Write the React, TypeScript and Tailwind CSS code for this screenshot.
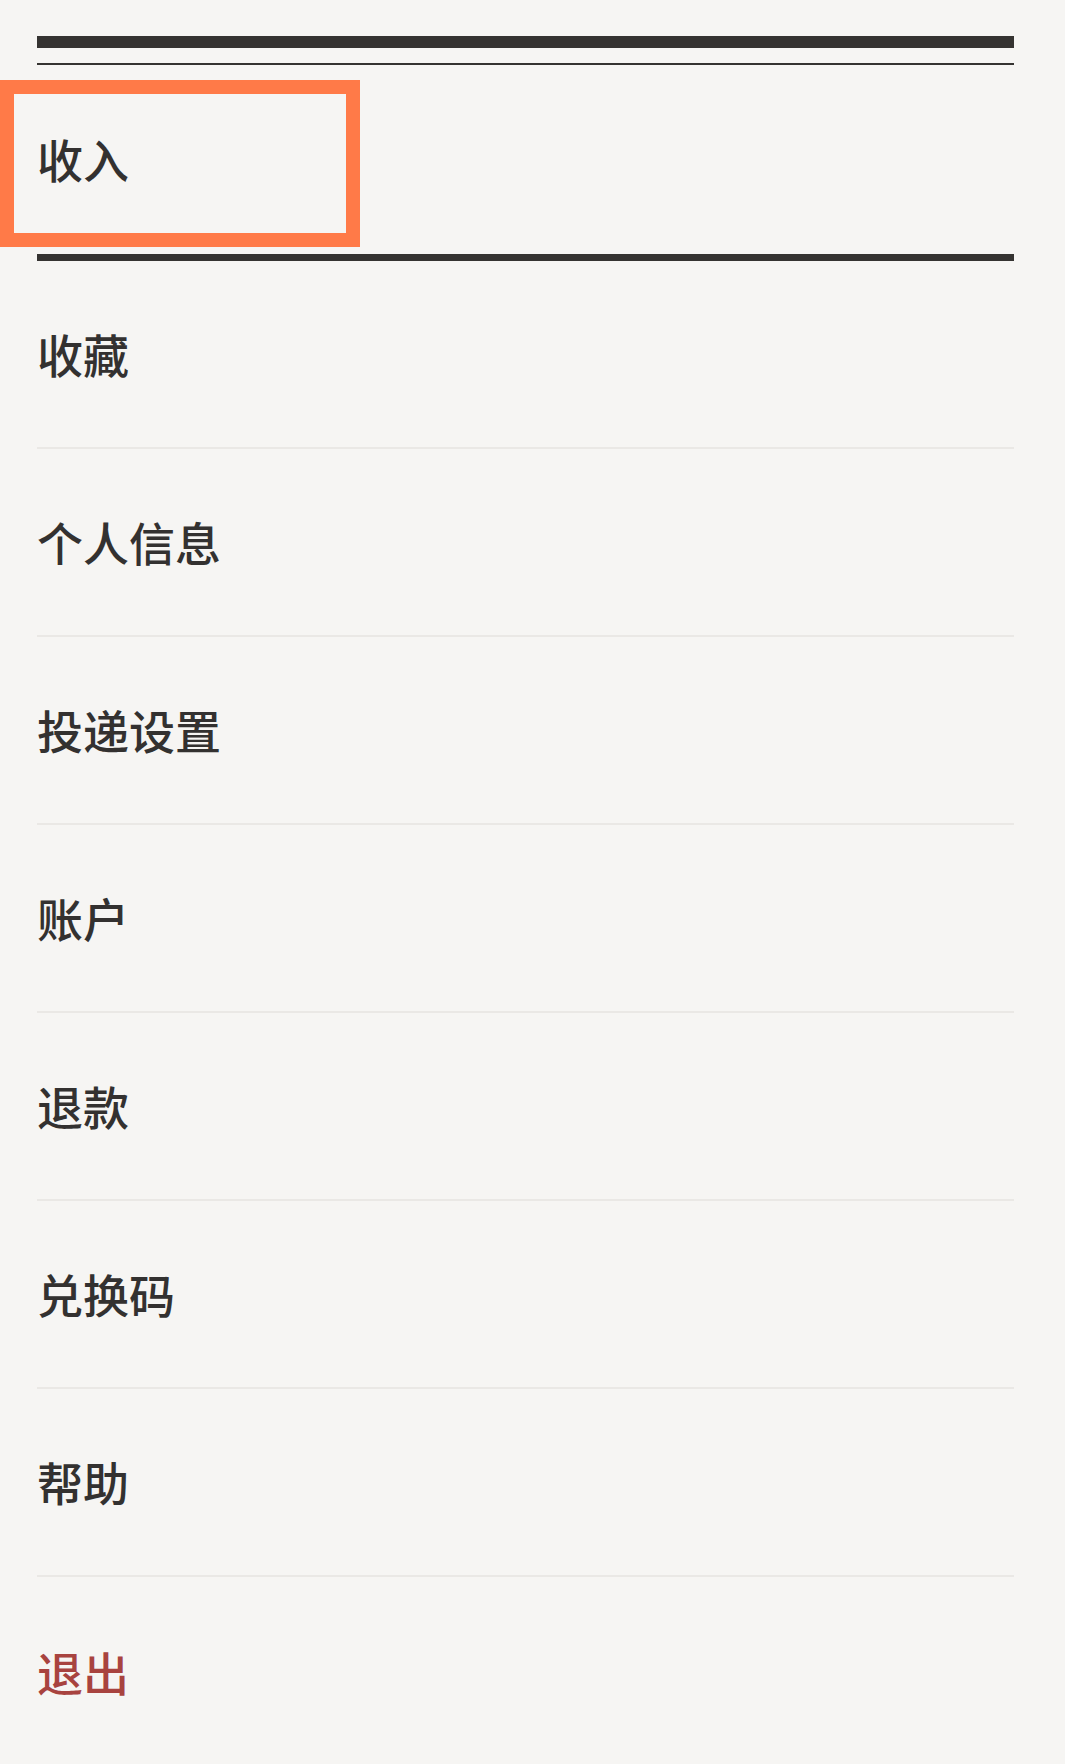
const items = ['收藏', '个人信息', '投递设置', '账户', '退款', '兑换码', '帮助']

export default function App() {
  return (
    <div
      className="relative min-h-[1764px] w-full bg-[#f6f5f3] pt-[36px]"
      style={{ fontFamily: '"Noto Sans CJK SC", "Noto Sans", sans-serif' }}
    >
      <div className="ml-[37px] w-[977px]">
        <div className="h-[12px] bg-[#353331]" />
        <div className="mt-[15px] h-[2px] bg-[#353331]" />
        <div className="flex h-[189px] items-center pb-[4px]">
          <span className="text-[46px] font-medium leading-none text-[#333130]">收入</span>
        </div>
        <div className="h-[7px] bg-[#353331]" />
        {items.map((label) => (
          <div key={label} className="flex h-[188px] items-center border-b-2 border-[#eae8e5] pb-[2px]">
            <span className="text-[46px] font-medium leading-none text-[#333130]">{label}</span>
          </div>
        ))}
        <div className="flex h-[188px] items-center">
          <span className="text-[46px] font-medium leading-none text-[#a8433f]">退出</span>
        </div>
      </div>
      <div className="absolute left-0 top-[80px] h-[167px] w-[360px] border-[14px] border-[#ff7a48]" />
    </div>
  )
}
